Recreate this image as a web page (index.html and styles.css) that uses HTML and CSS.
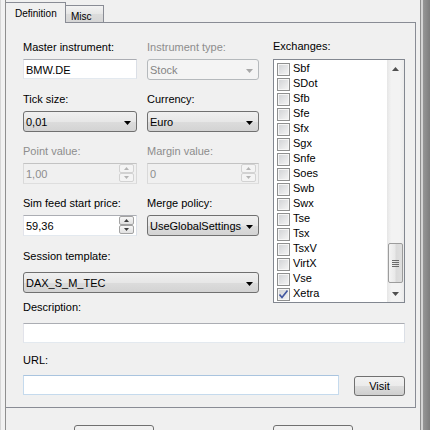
FILE: index.html
```html
<!DOCTYPE html>
<html>
<head>
<meta charset="utf-8">
<link rel="stylesheet" href="styles.css">
</head>
<body>
<div class="screen">
  <div class="edge-left"></div>
  <div class="main">
    <div class="tabs">
      <div class="tab tab-active">Definition</div>
      <div class="tab tab-misc">Misc</div>
    </div>
    <div class="panel">
      <div class="top">
        <div class="fields">
          <div class="grid">
            <div class="cell">
              <span class="lbl">Master instrument:</span>
              <div class="textbox">BMW.DE</div>
            </div>
            <div class="cell">
              <span class="lbl dis">Instrument type:</span>
              <div class="combo combo-dis"><span class="txt">Stock</span><svg class="dd" width="7" height="4" viewBox="0 0 7 4"><path d="M0 0h7L3.5 4z"/></svg></div>
            </div>
            <div class="cell">
              <span class="lbl">Tick size:</span>
              <div class="combo"><span class="txt">0,01</span><svg class="dd" width="7" height="4" viewBox="0 0 7 4"><path d="M0 0h7L3.5 4z"/></svg></div>
            </div>
            <div class="cell">
              <span class="lbl">Currency:</span>
              <div class="combo"><span class="txt">Euro</span><svg class="dd" width="7" height="4" viewBox="0 0 7 4"><path d="M0 0h7L3.5 4z"/></svg></div>
            </div>
            <div class="cell">
              <span class="lbl dis">Point value:</span>
              <div class="num num-dis"><span class="val">1,00</span><span class="spin"><span class="sb"><svg width="5" height="3" viewBox="0 0 5 3"><path d="M2.5 0L5 3H0z"/></svg></span><span class="sb"><svg width="5" height="3" viewBox="0 0 5 3"><path d="M0 0h5L2.5 3z"/></svg></span></span></div>
            </div>
            <div class="cell">
              <span class="lbl dis">Margin value:</span>
              <div class="num num-dis"><span class="val">0</span><span class="spin"><span class="sb"><svg width="5" height="3" viewBox="0 0 5 3"><path d="M2.5 0L5 3H0z"/></svg></span><span class="sb"><svg width="5" height="3" viewBox="0 0 5 3"><path d="M0 0h5L2.5 3z"/></svg></span></span></div>
            </div>
            <div class="cell">
              <span class="lbl">Sim feed start price:</span>
              <div class="num"><span class="val">59,36</span><span class="spin"><span class="sb"><svg width="5" height="3" viewBox="0 0 5 3"><path d="M2.5 0L5 3H0z"/></svg></span><span class="sb"><svg width="5" height="3" viewBox="0 0 5 3"><path d="M0 0h5L2.5 3z"/></svg></span></span></div>
            </div>
            <div class="cell">
              <span class="lbl">Merge policy:</span>
              <div class="combo"><span class="txt">UseGlobalSettings</span><svg class="dd" width="7" height="4" viewBox="0 0 7 4"><path d="M0 0h7L3.5 4z"/></svg></div>
            </div>
          </div>
          <span class="lbl session-lbl">Session template:</span>
          <div class="combo"><span class="txt">DAX_S_M_TEC</span><svg class="dd" width="7" height="4" viewBox="0 0 7 4"><path d="M0 0h7L3.5 4z"/></svg></div>
          <span class="lbl desc-lbl">Description:</span>
        </div>
        <div class="exchanges">
          <span class="lbl ex-lbl">Exchanges:</span>
          <div class="listbox">
            <ul class="items">
              <li><span class="chk"></span>Sbf</li>
              <li><span class="chk"></span>SDot</li>
              <li><span class="chk"></span>Sfb</li>
              <li><span class="chk"></span>Sfe</li>
              <li><span class="chk"></span>Sfx</li>
              <li><span class="chk"></span>Sgx</li>
              <li><span class="chk"></span>Snfe</li>
              <li><span class="chk"></span>Soes</li>
              <li><span class="chk"></span>Swb</li>
              <li><span class="chk"></span>Swx</li>
              <li><span class="chk"></span>Tse</li>
              <li><span class="chk"></span>Tsx</li>
              <li><span class="chk"></span>TsxV</li>
              <li><span class="chk"></span>VirtX</li>
              <li><span class="chk"></span>Vse</li>
              <li><span class="chk"><svg width="11" height="11" viewBox="0 0 11 11"><path d="M1.5 5.5L4 8.5L9.5 1.5" fill="none" stroke="#4257a0" stroke-width="1.7"/></svg></span>Xetra</li>
            </ul>
            <div class="vscroll">
              <div class="sbtn"><svg width="7" height="4" viewBox="0 0 7 4"><path d="M3.5 0L7 4H0z"/></svg></div>
              <div class="track">
                <div class="thumb"><svg width="7" height="7" viewBox="0 0 7 7"><path d="M0 .5h7M0 2.5h7M0 4.5h7M0 6.5h7" stroke="#6a6a6a" stroke-width="1"/></svg></div>
              </div>
              <div class="sbtn"><svg width="7" height="4" viewBox="0 0 7 4"><path d="M0 0h7L3.5 4z"/></svg></div>
            </div>
          </div>
        </div>
      </div>
      <div class="textbox desc"></div>
      <span class="lbl url-lbl">URL:</span>
      <div class="url-row">
        <div class="textbox url"></div>
        <div class="button visit">Visit</div>
      </div>
    </div>
    <div class="footer">
      <div class="button big"></div>
      <div class="button big"></div>
    </div>
  </div>
  <div class="edge-right"></div>
</div>
</body>
</html>
```

FILE: styles.css
```css
html, body {
  margin: 0;
  padding: 0;
}

body {
  width: 430px;
  height: 430px;
  overflow: hidden;
  background: #f0f0f0;
  font-family: "Liberation Sans", Arial, sans-serif;
  font-size: 11px;
  color: #000;
}

.screen {
  display: flex;
  height: 430px;
  overflow: hidden;
}

.edge-left {
  width: 5px;
  flex: none;
  background: linear-gradient(to right, #d6d6d6 0 1px, #f2f2f2 1px);
}

.main {
  width: 414px;
  flex: none;
  border-left: 1px solid #8f8f8f;
  border-right: 1px solid #8f8f8f;
  display: flex;
  flex-direction: column;
  overflow: hidden;
}

.main > * {
  flex: none;
}

.edge-right {
  flex: 1;
  background: linear-gradient(to right, #d4d4d4 0 2px, #969696 2px, #7e7e7e);
}

/* tabs */
.tabs {
  display: flex;
  align-items: flex-end;
  height: 22px;
}

.tab {
  box-sizing: border-box;
  font-size: 10px;
  line-height: 13px;
  border-top: 1px solid #898c95;
  border-right: 1px solid #898c95;
  white-space: nowrap;
}

.tab-active {
  width: 60px;
  height: 21px;
  margin-bottom: -1px;
  padding: 4px 0 0 9px;
  background: #f0f0f0;
  position: relative;
  z-index: 1;
}

.tab-misc {
  width: 38px;
  height: 17px;
  padding: 4px 0 0 5px;
  background: linear-gradient(#f3f3f3, #e6e6e6 50%, #dcdcdc 51%, #d6d6d6);
}

/* panel */
.panel {
  box-sizing: border-box;
  width: 410px;
  height: 386px;
  border-top: 1px solid #898c95;
  border-right: 1px solid #898c95;
  border-bottom: 1px solid #898c95;
  padding-left: 17px;
}

.top {
  display: flex;
  align-items: flex-start;
}

.fields {
  width: 236px;
  padding-top: 18px;
}

.grid {
  display: grid;
  grid-template-columns: 114px 112px;
  column-gap: 10px;
  row-gap: 13px;
}

.cell {
  display: flex;
  flex-direction: column;
  height: 39px;
}

.lbl {
  display: block;
  height: 13px;
  line-height: 13px;
  white-space: nowrap;
}

.cell .lbl {
  margin-bottom: 5px;
}

.lbl.dis {
  color: #8d8d8d;
}

.session-lbl {
  margin-top: 14px;
  margin-bottom: 9px;
}

.desc-lbl {
  margin-top: 8px;
}

.exchanges {
  width: 132px;
  margin-left: 14px;
  padding-top: 17px;
}

.ex-lbl {
  margin-bottom: 6px;
}

/* textbox */
.textbox {
  box-sizing: border-box;
  height: 20px;
  border: 1px solid;
  border-color: #abadb3 #dbdfe6 #e3e9ef #e2e3ea;
  background: #fff;
  padding: 2px 2px 0;
  line-height: 16px;
  white-space: nowrap;
  overflow: hidden;
}

.desc {
  width: 382px;
  margin-top: 9px;
}

.url-lbl {
  margin-top: 11px;
}

.url-row {
  display: flex;
  align-items: flex-start;
  gap: 15px;
  margin-top: 8px;
}

.url {
  width: 316px;
  border-color: #a9c4df #c5daed #c5daed #c5daed;
}

/* combo */
.combo {
  box-sizing: border-box;
  height: 21px;
  border: 1px solid #707070;
  border-radius: 3px;
  background: linear-gradient(#f0f0f0, #e7e7e7 50%, #dcdcdc 51%, #d3d3d3);
  display: flex;
  align-items: flex-start;
  padding: 2px 0 0 2px;
  line-height: 16px;
  white-space: nowrap;
}

.combo .txt {
  flex: 1;
}

.combo .dd {
  align-self: center;
  margin: 1px 5px 0 0;
  fill: #000;
}

.combo-dis {
  border-color: #b5b9bc;
  background: #f4f4f4;
  color: #848484;
}

.combo-dis .dd {
  fill: #a8a8a8;
}

/* numeric up-down */
.num {
  box-sizing: border-box;
  height: 21px;
  border: 1px solid;
  border-color: #abadb3 #dbdfe6 #e3e9ef #e2e3ea;
  background: #fff;
  display: flex;
  align-items: flex-start;
}

.num .val {
  flex: 1;
  padding: 2px 0 0 2px;
  line-height: 16px;
}

.spin {
  width: 15px;
  height: 18px;
  margin-right: 2px;
  display: flex;
  flex-direction: column;
}

.sb {
  box-sizing: border-box;
  height: 9px;
  border: 1px solid #a3a3a3;
  border-radius: 2px;
  background: linear-gradient(#f7f7f7, #e1e1e1);
  display: flex;
  align-items: center;
  justify-content: center;
  fill: #3c3c3c;
}

.num-dis {
  background: #f0f0f0;
  border-color: #c3c3c3 #d9d9d9 #dedede #d9d9d9;
  color: #8d8d8d;
}

.num-dis .sb {
  border-color: #d2d2d2;
  background: #f4f4f4;
  fill: #b4b4b4;
}

/* listbox */
.listbox {
  box-sizing: border-box;
  height: 244px;
  border: 1px solid #828790;
  background: #fff;
  display: flex;
}

.items {
  list-style: none;
  margin: 0;
  padding: 1px 0 0 3px;
  flex: 1;
}

.items li {
  height: 15px;
  line-height: 15px;
  display: flex;
  align-items: flex-start;
  white-space: nowrap;
}

.chk {
  box-sizing: border-box;
  width: 13px;
  height: 13px;
  margin: 2px 3px 0 0;
  border: 1px solid #8e8f8f;
  background: linear-gradient(135deg, #cfd1d4, #f6f6f6);
  box-shadow: inset 0 0 0 1px #f6f6f6;
  display: flex;
}

.vscroll {
  width: 17px;
  display: flex;
  flex-direction: column;
  background: linear-gradient(to right, #e6e6e6, #f3f3f3 25%, #f3f3f3 75%, #ebebeb);
}

.sbtn {
  height: 17px;
  flex: none;
  display: flex;
  align-items: center;
  justify-content: center;
  fill: #505050;
}

.track {
  flex: 1;
}

.thumb {
  box-sizing: border-box;
  height: 40px;
  margin: 166px 1px 0;
  border: 1px solid #9c9c9c;
  border-radius: 2px;
  background: linear-gradient(to right, #f4f4f4, #e9e9e9 45%, #dadada 55%, #dfdfdf);
  display: flex;
  align-items: center;
  justify-content: center;
}

/* buttons */
.button {
  box-sizing: border-box;
  border: 1px solid #707070;
  border-radius: 3px;
  background: linear-gradient(#f2f2f2, #ebebeb 50%, #dddddd 51%, #cfcfcf);
  text-align: center;
  white-space: nowrap;
}

.visit {
  width: 51px;
  height: 20px;
  margin-top: 1px;
  line-height: 18px;
}

.footer {
  display: flex;
  gap: 119px;
  padding: 17px 0 0 68px;
}

.big {
  width: 80px;
  height: 23px;
  flex: none;
}
```
